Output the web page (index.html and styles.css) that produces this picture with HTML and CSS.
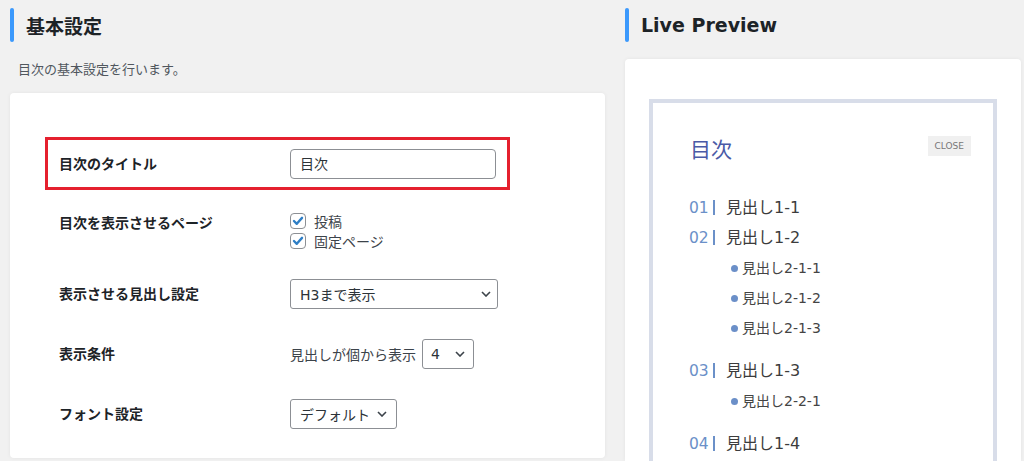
FILE: index.html
```html
<!DOCTYPE html>
<html lang="ja">
<head>
<meta charset="utf-8">
<title>目次設定</title>
<link rel="stylesheet" href="styles.css">
</head>
<body>
<div class="page">
  <section class="col col-left">
    <h2 class="heading"><span class="bar"></span>基本設定</h2>
    <p class="desc">目次の基本設定を行います。</p>
    <div class="card settings">
      <div class="row highlight">
        <div class="label">目次のタイトル</div>
        <div class="control"><div class="input">目次</div></div>
      </div>
      <div class="row top">
        <div class="label label-top">目次を表示させるページ</div>
        <div class="control checks">
          <label class="check"><span class="box"><svg viewBox="0 0 16 16" width="16" height="16"><path d="M3.4 8 L6.6 11.2 L12.6 4.4" fill="none" stroke="#2f7fc6" stroke-width="2.7" stroke-linecap="round" stroke-linejoin="round"/></svg></span>投稿</label>
          <label class="check"><span class="box"><svg viewBox="0 0 16 16" width="16" height="16"><path d="M3.4 8 L6.6 11.2 L12.6 4.4" fill="none" stroke="#2f7fc6" stroke-width="2.7" stroke-linecap="round" stroke-linejoin="round"/></svg></span>固定ページ</label>
        </div>
      </div>
      <div class="row">
        <div class="label">表示させる見出し設定</div>
        <div class="control"><div class="select sel-wide"><span>H3まで表示</span><svg class="chev" viewBox="0 0 10 6" width="10" height="6"><path d="M1 1 L5 5 L9 1" fill="none" stroke="#3c434a" stroke-width="1.6"/></svg></div></div>
      </div>
      <div class="row">
        <div class="label">表示条件</div>
        <div class="control inline"><span class="pre">見出しが個から表示</span><div class="select sel-num"><span>4</span><svg class="chev" viewBox="0 0 10 6" width="10" height="6"><path d="M1 1 L5 5 L9 1" fill="none" stroke="#3c434a" stroke-width="1.6"/></svg></div></div>
      </div>
      <div class="row">
        <div class="label">フォント設定</div>
        <div class="control"><div class="select sel-font"><span>デフォルト</span><svg class="chev" viewBox="0 0 10 6" width="10" height="6"><path d="M1 1 L5 5 L9 1" fill="none" stroke="#3c434a" stroke-width="1.6"/></svg></div></div>
      </div>
    </div>
  </section>
  <section class="col col-right">
    <h2 class="heading"><span class="bar"></span>Live Preview</h2>
    <div class="card preview">
      <div class="toc">
        <div class="toc-head">
          <div class="toc-title">目次</div>
          <div class="close">CLOSE</div>
        </div>
        <ul class="toc-list">
          <li class="lv1"><span class="num">01</span><span class="sep"></span>見出し1-1</li>
          <li class="lv1"><span class="num">02</span><span class="sep"></span>見出し1-2
            <ul class="sub">
              <li><span class="dot"></span>見出し2-1-1</li>
              <li><span class="dot"></span>見出し2-1-2</li>
              <li><span class="dot"></span>見出し2-1-3</li>
            </ul>
          </li>
          <li class="lv1"><span class="num">03</span><span class="sep"></span>見出し1-3
            <ul class="sub">
              <li><span class="dot"></span>見出し2-2-1</li>
            </ul>
          </li>
          <li class="lv1"><span class="num">04</span><span class="sep"></span>見出し1-4</li>
        </ul>
      </div>
    </div>
  </section>
</div>
</body>
</html>
```
FILE: styles.css
```css
html, body {
  margin: 0;
  padding: 0;
  height: 461px;
  overflow: hidden;
}
body {
  background: #f1f1f1;
  font-family: "DejaVu Sans", "Noto Sans CJK JP", sans-serif;
  color: #1d2327;
}
.page {
  display: flex;
  align-items: flex-start;
}
.col-left {
  margin-left: 10px;
  width: 595px;
}
.col-right {
  margin-left: 20px;
  width: 396px;
}
.heading {
  margin: 8px 0 0 0;
  height: 34px;
  display: flex;
  align-items: center;
  gap: 12px;
  font-size: 19px;
  font-weight: bold;
  color: #1d2327;
}
.bar {
  width: 4px;
  height: 34px;
  border-radius: 3px;
  background: #3b99fc;
}
.desc {
  margin: 18px 0 0 8px;
  font-size: 13px;
  line-height: 20px;
  color: #50575e;
}
.card {
  background: #fff;
  border-radius: 4px;
  box-shadow: 0 0 4px rgba(0, 0, 0, 0.06);
}
.settings {
  margin-top: 13px;
  height: 365px;
  box-sizing: border-box;
  padding-top: 44px;
}
.row {
  margin-left: 35px;
  width: 465px;
  box-sizing: border-box;
  min-height: 60px;
  border: 3px solid transparent;
  padding: 0 11px;
  display: grid;
  grid-template-columns: 231px auto;
  align-items: center;
}
.row.highlight {
  border-color: #e5202e;
  min-height: 53px;
  height: 53px;
}
.row.top {
  height: 74px;
  align-items: start;
  padding-top: 18px;
}
.label {
  font-size: 14px;
  font-weight: bold;
  color: #1d2327;
  line-height: 20px;
}
.label-top {
  padding-top: 2px;
}
.input {
  width: 206px;
  height: 30px;
  box-sizing: border-box;
  border: 1px solid #8c8f94;
  border-radius: 4px;
  padding: 0 9px;
  font-size: 14px;
  line-height: 28px;
  color: #2c3338;
}
.checks {
  display: flex;
  flex-direction: column;
}
.check {
  display: flex;
  align-items: center;
  gap: 8px;
  height: 20px;
  font-size: 14px;
  color: #3c434a;
}
.box {
  width: 16px;
  height: 16px;
  box-sizing: border-box;
  border: 1px solid #8c8f94;
  border-radius: 4px;
  background: #fff;
  display: flex;
  align-items: center;
  justify-content: center;
}
.box svg {
  display: block;
}
.select {
  height: 30px;
  box-sizing: border-box;
  border: 1px solid #8c8f94;
  border-radius: 3px;
  display: flex;
  align-items: center;
  justify-content: space-between;
  font-size: 14px;
  color: #2c3338;
  background: #fff;
}
.chev {
  display: block;
}
.sel-wide {
  width: 208px;
  padding: 0 6px 0 9px;
}
.sel-num {
  width: 52px;
  padding: 0 8px 0 8px;
}
.sel-font {
  width: 107px;
  padding: 0 9px 0 9px;
}
.inline {
  display: flex;
  align-items: center;
  gap: 6px;
}
.pre {
  font-size: 14px;
  color: #3c434a;
}
.preview {
  margin-top: 17px;
  height: 402px;
  padding: 40px 24px 0 24px;
  box-sizing: border-box;
  border-radius: 4px 4px 0 0;
}
.toc {
  border: 4px solid #d8dde9;
  border-bottom: none;
  height: 362px;
  box-sizing: border-box;
  padding: 33px 22px 0 36px;
}
.toc-head {
  display: flex;
  justify-content: space-between;
  align-items: flex-start;
}
.toc-title {
  font-size: 21px;
  line-height: 28px;
  color: #4a5aa6;
  padding-left: 1px;
}
.close {
  background: #f0f0f0;
  font-size: 9px;
  line-height: 20px;
  height: 20px;
  padding: 0 7px;
  color: #777;
}
.toc-list {
  list-style: none;
  margin: 29px 0 0 0;
  padding: 0;
}
.lv1 {
  font-size: 16px;
  line-height: 30px;
  color: #3c3c3c;
}
.num {
  display: inline-block;
  font-size: 15.5px;
  color: #6b90c8;
  width: 24px;
}
.sep {
  display: inline-block;
  width: 2px;
  height: 15px;
  background: #6b90c8;
  margin-right: 11px;
  vertical-align: -2px;
}
.sub {
  list-style: none;
  margin: 0 0 13px 0;
  padding: 0 0 0 42px;
}
.sub li {
  font-size: 14px;
  line-height: 30px;
  color: #444;
  display: flex;
  align-items: center;
}
.dot {
  width: 7px;
  height: 7px;
  border-radius: 50%;
  background: #6b8fc8;
  margin-right: 4px;
}
```
